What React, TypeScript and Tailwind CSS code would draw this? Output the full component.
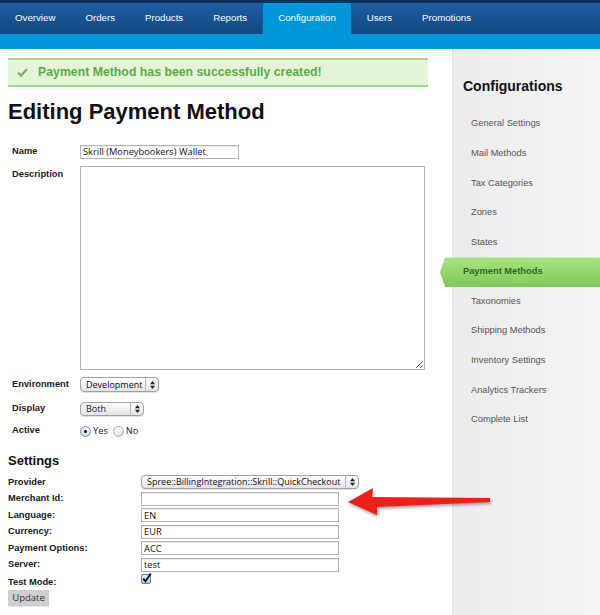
import React from "react";

const lbl = "font-bold text-[9.3px] leading-none text-[#1a1a1a]";
const inputFont = "font-['Open_Sans',sans-serif] text-[9.3px] leading-none text-[#111]";

function Arrows() {
  return (
    <svg width="5" height="8" viewBox="0 0 5 8">
      <polygon points="0,3.3 2.5,0 5,3.3" fill="#222" />
      <polygon points="0,4.7 5,4.7 2.5,8" fill="#222" />
    </svg>
  );
}

function Select({ text, w, h }: { text: string; w: string; h: string }) {
  return (
    <div
      className={`flex ${w} ${h} items-center rounded-[4px] border border-[#a0a0a0] bg-gradient-to-b from-white to-[#e4e4e4] shadow-[0_1px_1px_rgba(0,0,0,0.12)]`}
    >
      <span className="flex-1 whitespace-nowrap pl-[5px] font-['Open_Sans',sans-serif] text-[9px] leading-[12px] text-[#111]">
        {text}
      </span>
      <span className="flex h-full w-[13px] shrink-0 items-center justify-center border-l border-[#b8b8b8]">
        <Arrows />
      </span>
    </div>
  );
}

function TextInput({ value, w }: { value?: string; w: string }) {
  return (
    <div
      className={`flex ${w} h-[14px] items-center border border-[#b4b4b4] bg-white pl-[2px] shadow-[inset_0_1px_1px_rgba(0,0,0,0.08)] ${inputFont}`}
    >
      {value}
    </div>
  );
}

function Radio({ checked }: { checked?: boolean }) {
  return (
    <span
      className={`flex h-[11px] w-[11px] items-center justify-center rounded-full border ${
        checked ? "border-[#6b89b8] bg-gradient-to-b from-[#f4f6fa] to-[#d9dfe9]" : "border-[#a5a5a5] bg-gradient-to-b from-white to-[#e3e3e3]"
      }`}
    >
      {checked && <span className="h-[3px] w-[3px] rounded-full bg-[#111]" />}
    </span>
  );
}

const navItems = ["Overview", "Orders", "Products", "Reports", "Configuration", "Users", "Promotions"];
const sideItems = [
  "General Settings",
  "Mail Methods",
  "Tax Categories",
  "Zones",
  "States",
  "Payment Methods",
  "Taxonomies",
  "Shipping Methods",
  "Inventory Settings",
  "Analytics Trackers",
  "Complete List",
];

export default function App() {
  return (
    <div className="relative h-[615px] w-[600px] overflow-hidden bg-white font-['Liberation_Sans',Arial,sans-serif]">
      {/* Top navigation */}
      <div className="flex h-[34px] border-t-[3px] border-[#10305c] bg-gradient-to-b from-[#1c5fa3] to-[#124780]">
        {navItems.map((n) =>
          n === "Configuration" ? (
            <div
              key={n}
              className="flex items-center border-x border-[#0b5f9e] bg-[#0096da] px-[15px] text-[9.7px] text-white"
            >
              {n}
            </div>
          ) : (
            <div key={n} className="flex items-center px-[15px] text-[9.7px] text-white">
              {n}
            </div>
          )
        )}
      </div>
      <div className="h-[15px] bg-[#0096da]" />

      <div className="flex h-[566px]">
        {/* Main column */}
        <div className="w-[452px] pl-[8px]">
          <div className="mt-[9px] flex h-[29px] w-[420px] items-center border-y-2 border-[#a5d591] bg-[#e5f5d8] pl-[9px]">
            <svg width="11" height="9" viewBox="0 0 11 9">
              <path d="M1 4.8 L4 7.6 L10 1.2" fill="none" stroke="#6ab456" strokeWidth="2.2" />
            </svg>
            <span className="ml-[10px] text-[12.3px] font-bold leading-none text-[#5bab47]">
              Payment Method has been successfully created!
            </span>
          </div>

          <h1 className="mt-[14px] text-[22px] font-bold leading-none text-[#111]">Editing Payment Method</h1>

          <div className="mt-[22px] pl-[4px]">
            <div className="flex h-[14px] items-center">
              <span className={`w-[68px] ${lbl}`}>Name</span>
              <TextInput w="w-[159px]" value="Skrill (Moneybookers) Wallet" />
            </div>
            <div className="mt-[7px] flex items-start">
              <span className={`w-[68px] pt-[4px] ${lbl}`}>Description</span>
              <textarea
                className="h-[204px] w-[345px] border border-[#b4b4b4] bg-white"
                defaultValue=""
              />
            </div>
            <div className="mt-[7px] flex h-[15px] items-center">
              <span className={`w-[68px] ${lbl}`}>Environment</span>
              <Select text="Development" w="w-[79px]" h="h-[15px]" />
            </div>
            <div className="mt-[10px] flex h-[14px] items-center">
              <span className={`w-[68px] ${lbl}`}>Display</span>
              <Select text="Both" w="w-[64px]" h="h-[14px]" />
            </div>
            <div className="mt-[8px] flex h-[14px] items-center">
              <span className={`w-[68px] ${lbl}`}>Active</span>
              <Radio checked />
              <span className={`ml-[2px] ${inputFont} text-[#222]`}>Yes</span>
              <span className="ml-[5px]">
                <Radio />
              </span>
              <span className={`ml-[2px] ${inputFont} text-[#222]`}>No</span>
            </div>
          </div>

          <h2 className="mt-[16px] text-[13px] font-bold leading-none text-[#111]">Settings</h2>

          <div className="mt-[7px]">
            <div className="flex h-[16.5px] items-center">
              <span className={`w-[133px] ${lbl}`}>Provider</span>
              <Select text="Spree::BillingIntegration::Skrill::QuickCheckout" w="w-[218px]" h="h-[14px]" />
            </div>
            {[
              ["Merchant Id:", ""],
              ["Language:", "EN"],
              ["Currency:", "EUR"],
              ["Payment Options:", "ACC"],
              ["Server:", "test"],
            ].map(([l, v]) => (
              <div key={l} className="flex h-[16.5px] items-center">
                <span className={`w-[133px] ${lbl}`}>{l}</span>
                <TextInput w="w-[198px]" value={v} />
              </div>
            ))}
            <div className="flex h-[16.5px] items-start">
              <span className={`w-[133px] pt-[5px] ${lbl}`}>Test Mode:</span>
              <svg width="11" height="11" viewBox="0 0 11 11">
                <defs>
                  <linearGradient id="cb" x1="0" y1="0" x2="0" y2="1">
                    <stop offset="0" stopColor="#e9f1fb" />
                    <stop offset="1" stopColor="#a9c6ea" />
                  </linearGradient>
                </defs>
                <rect x="0.5" y="1.5" width="9" height="9" rx="1.5" fill="url(#cb)" stroke="#5a7fb4" />
                <path d="M2.2 5.6 L4.4 8.2 L9.8 0.6" fill="none" stroke="#111" strokeWidth="1.8" />
              </svg>
            </div>
          </div>
          <button className="flex h-[16px] w-[41px] items-center justify-center bg-[#cfcfcf] font-['Open_Sans',sans-serif] text-[9.5px] leading-none text-[#333] shadow-[0_1px_0_rgba(0,0,0,0.1)]">
            Update
          </button>
        </div>

        {/* Sidebar */}
        <div className="flex-1 border-l border-[#e2e2e2] bg-gradient-to-r from-[#ececec] to-[#f5f5f5]">
          <h3 className="ml-[10px] mt-[30px] text-[14px] font-bold leading-none text-[#111]">Configurations</h3>
          <div className="mt-[16.5px]">
            {sideItems.map((s) =>
              s === "Payment Methods" ? (
                <div
                  key={s}
                  className="-ml-[13px] flex h-[29.6px] items-center bg-gradient-to-b from-[#abe380] to-[#7ec859] pl-[23px] text-[9.3px] font-bold text-[#2c6a22] [clip-path:polygon(5px_0,100%_0,100%_100%,5px_100%,0_50%)]"
                >
                  {s}
                </div>
              ) : (
                <div key={s} className="flex h-[29.6px] items-center pl-[18px] text-[9.3px] text-[#555]">
                  {s}
                </div>
              )
            )}
          </div>
        </div>
      </div>

      {/* Red annotation arrow */}
      <svg
        className="absolute left-[340px] top-[480px] drop-shadow-[1px_2px_1.5px_rgba(0,0,0,0.35)]"
        width="160"
        height="45"
        viewBox="0 0 160 45"
      >
        <polygon points="8,22 33,8 32,17 150,18 150,22 37,27 37,35" fill="#ec1f1a" />
      </svg>
    </div>
  );
}
